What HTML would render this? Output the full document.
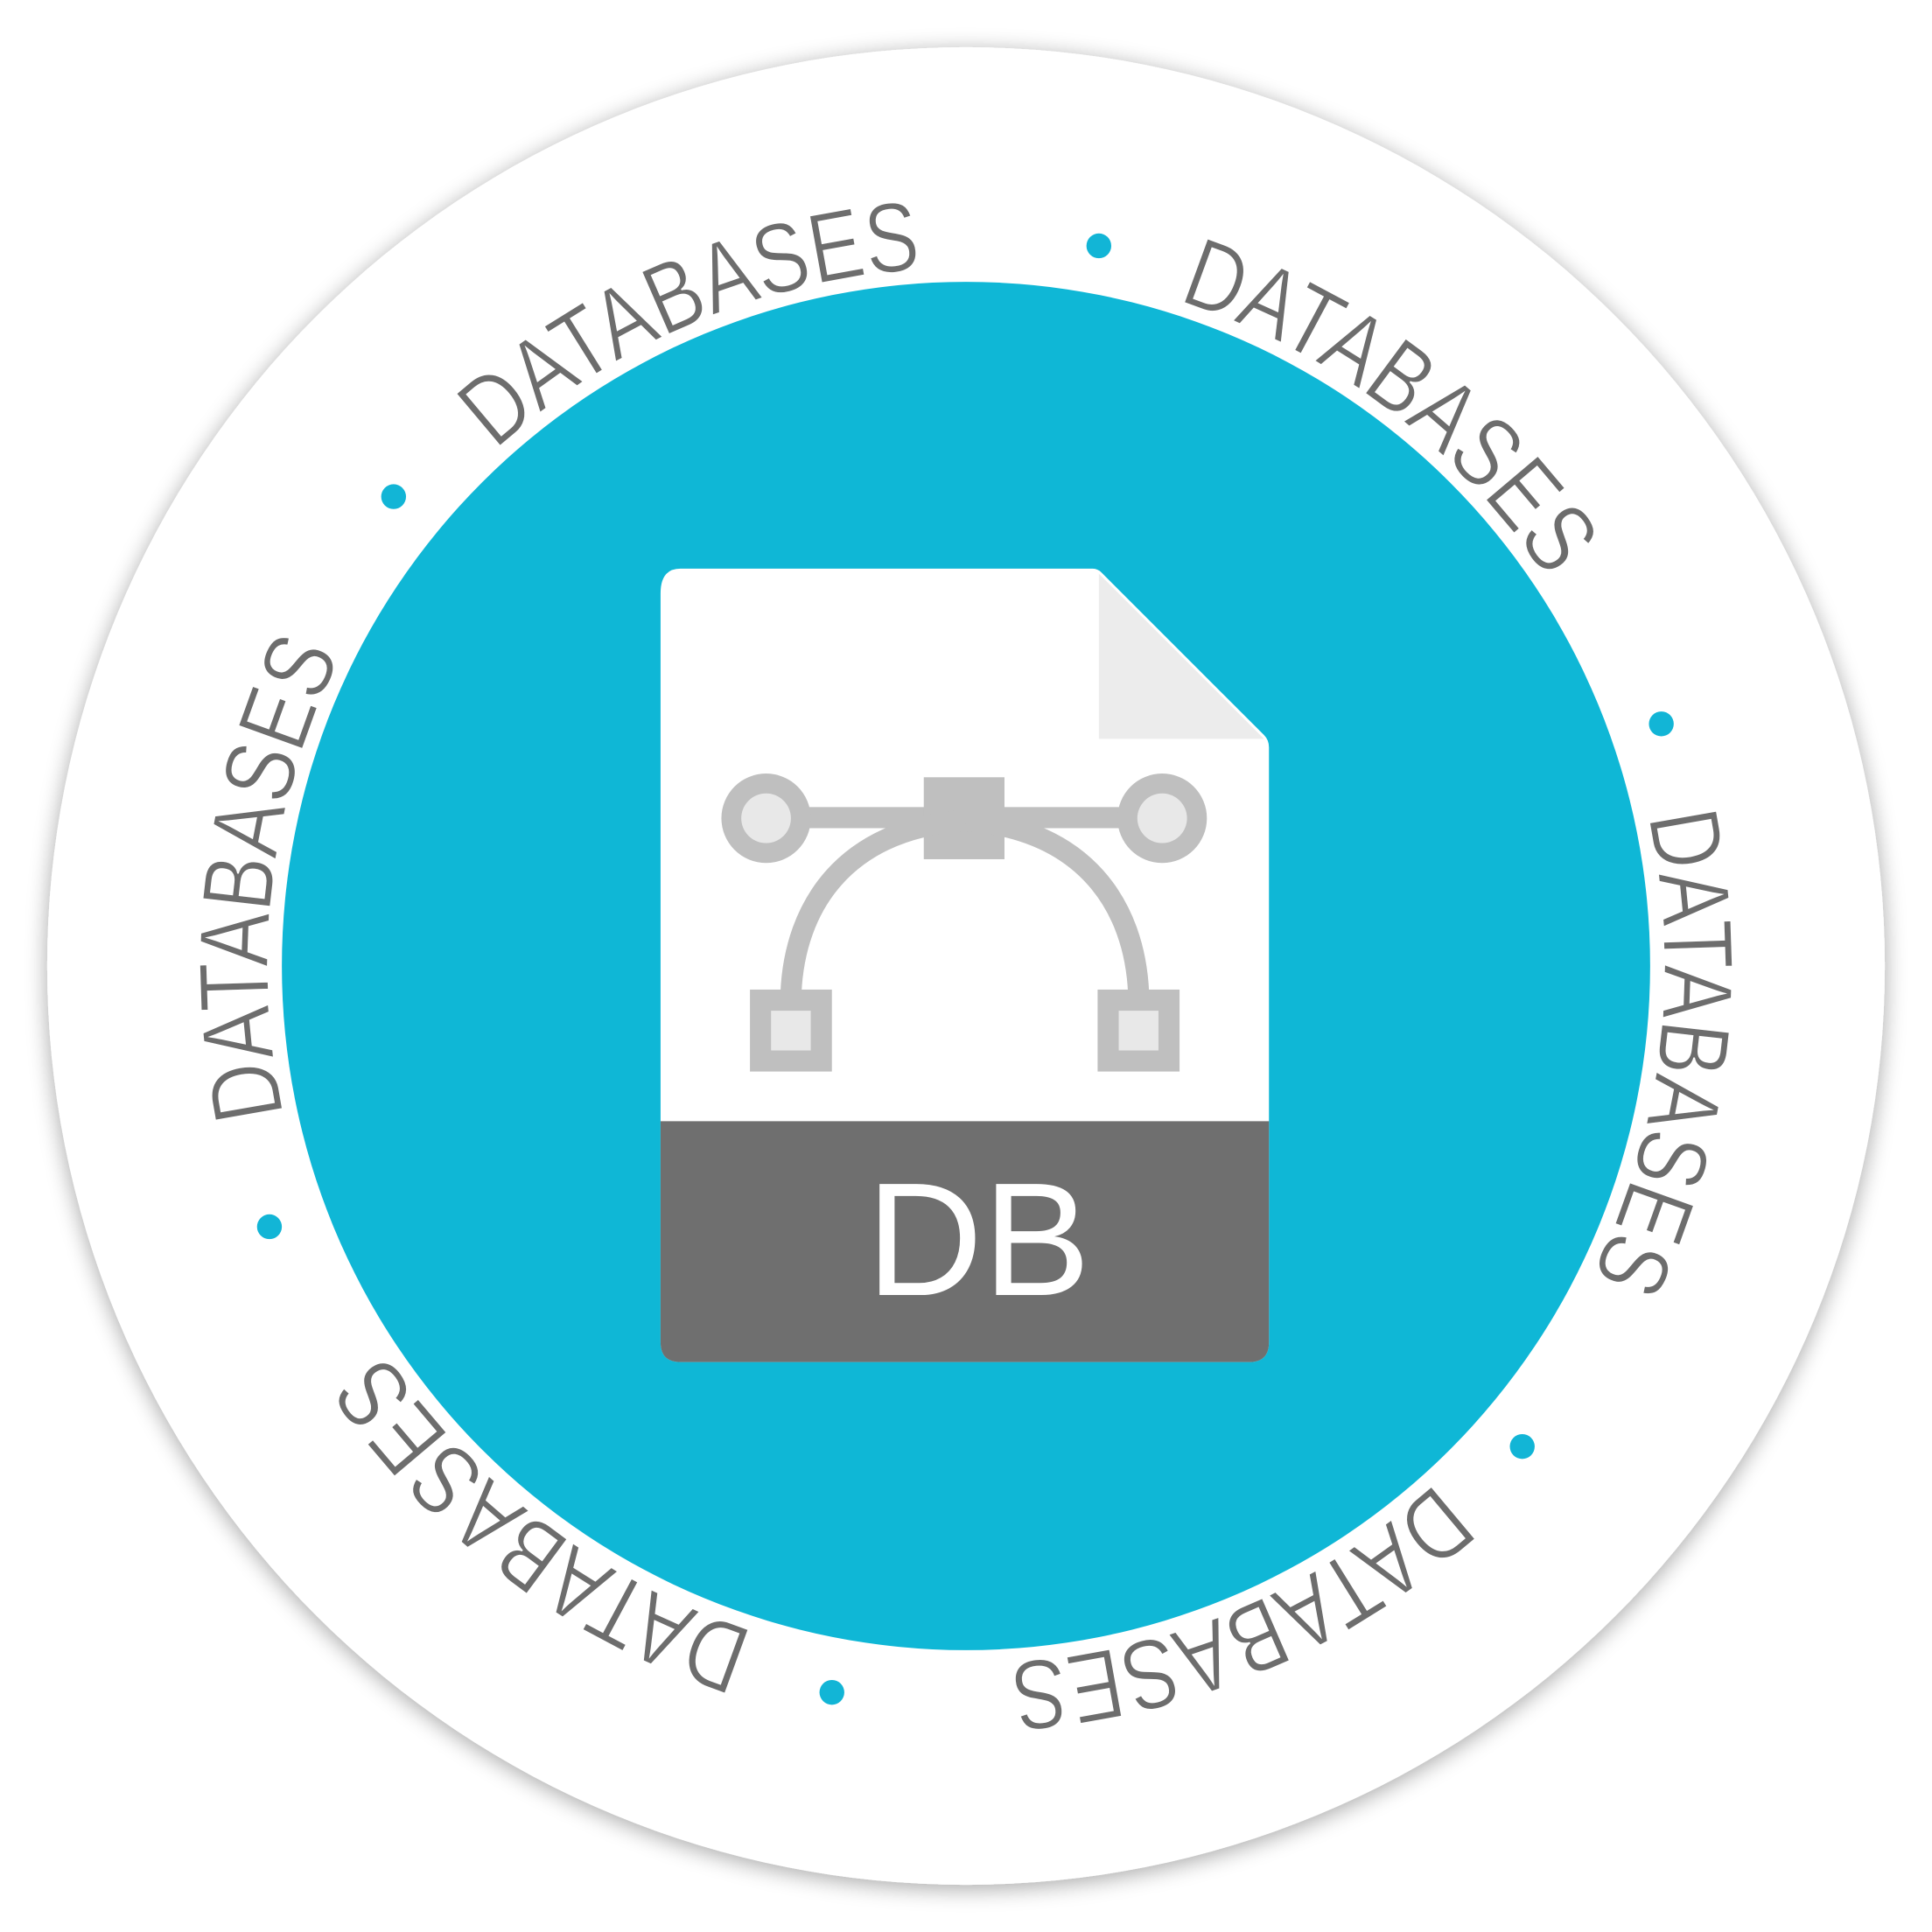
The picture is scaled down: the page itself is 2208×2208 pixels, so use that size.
<!DOCTYPE html>
<html><head><meta charset="utf-8"><style>
html,body{margin:0;padding:0;background:#fff;}
svg{display:block;}
</style></head><body>
<svg width="2208" height="2208" viewBox="0 0 1556 1556" xmlns="http://www.w3.org/2000/svg">
<defs>
<filter id="sh" x="-10%" y="-10%" width="120%" height="120%">
<feGaussianBlur in="SourceAlpha" stdDeviation="9"/>
<feOffset dx="0" dy="3"/>
<feComponentTransfer><feFuncA type="linear" slope="0.35"/></feComponentTransfer>
<feMerge><feMergeNode/><feMergeNode in="SourceGraphic"/></feMerge>
</filter>
<path id="cp" d="M778,216 A562,562 0 1 1 778,1340 A562,562 0 1 1 778,216 A562,562 0 1 1 778,1340 A562,562 0 1 1 778,216"/>
</defs>
<rect width="1556" height="1556" fill="#fff"/>
<circle cx="778" cy="778" r="740" fill="#fff" filter="url(#sh)"/>
<circle cx="778" cy="778" r="551" fill="#0fb7d6"/>
<g font-family="Liberation Sans, sans-serif" font-size="80" fill="#6d6d6d" stroke="#fff" stroke-width="1.2">
<text><textPath href="#cp" startOffset="3115" textLength="380" lengthAdjust="spacingAndGlyphs">DATABASES</textPath></text>
<text><textPath href="#cp" startOffset="3704" textLength="380" lengthAdjust="spacingAndGlyphs">DATABASES</textPath></text>
<text><textPath href="#cp" startOffset="4292" textLength="380" lengthAdjust="spacingAndGlyphs">DATABASES</textPath></text>
<text><textPath href="#cp" startOffset="4881" textLength="380" lengthAdjust="spacingAndGlyphs">DATABASES</textPath></text>
<text><textPath href="#cp" startOffset="5469" textLength="380" lengthAdjust="spacingAndGlyphs">DATABASES</textPath></text>
<text><textPath href="#cp" startOffset="6058" textLength="380" lengthAdjust="spacingAndGlyphs">DATABASES</textPath></text>
</g>
<g fill="#12b5d6">
<circle cx="885" cy="198" r="10"/>
<circle cx="1338" cy="583" r="10"/>
<circle cx="1226" cy="1165" r="10"/>
<circle cx="670" cy="1363" r="10"/>
<circle cx="217" cy="988" r="10"/>
<circle cx="317" cy="400" r="10"/>
</g>
<path d="M548,458 L880,458 Q884,458 887,461 L1018,592 Q1022,596 1022,602 L1022,1081 Q1022,1097 1006,1097 L548,1097 Q532,1097 532,1081 L532,478 Q532,458 548,458 Z" fill="#fff"/>
<path d="M885,462 L885,595 L1018,595 Z" fill="#ececec"/>
<path d="M532,903 L1022,903 L1022,1081 Q1022,1097 1006,1097 L548,1097 Q532,1097 532,1081 Z" fill="#6f6f6f"/>
<text x="788" y="1043" font-family="Liberation Sans, sans-serif" font-size="130" fill="#fff" text-anchor="middle">DB</text>
<g fill="#bfbfbf">
<rect x="648" y="650" width="100" height="17"/>
<rect x="806" y="650" width="100" height="17"/>
<rect x="744" y="626" width="65" height="66"/>
<circle cx="617" cy="659" r="36"/>
<circle cx="936" cy="659" r="36"/>
<rect x="604" y="797" width="66" height="66"/>
<rect x="884" y="797" width="66" height="66"/>
</g>
<g fill="none" stroke="#bfbfbf" stroke-width="17">
<path d="M776,661 C680,668 640,730 637,800"/>
<path d="M778,661 C874,668 914,730 917,800"/>
</g>
<g fill="#e8e8e8">
<circle cx="617" cy="659" r="20"/>
<circle cx="936" cy="659" r="20"/>
<rect x="621" y="814" width="32" height="32"/>
<rect x="901" y="814" width="32" height="32"/>
</g>
</svg>
</body></html>
